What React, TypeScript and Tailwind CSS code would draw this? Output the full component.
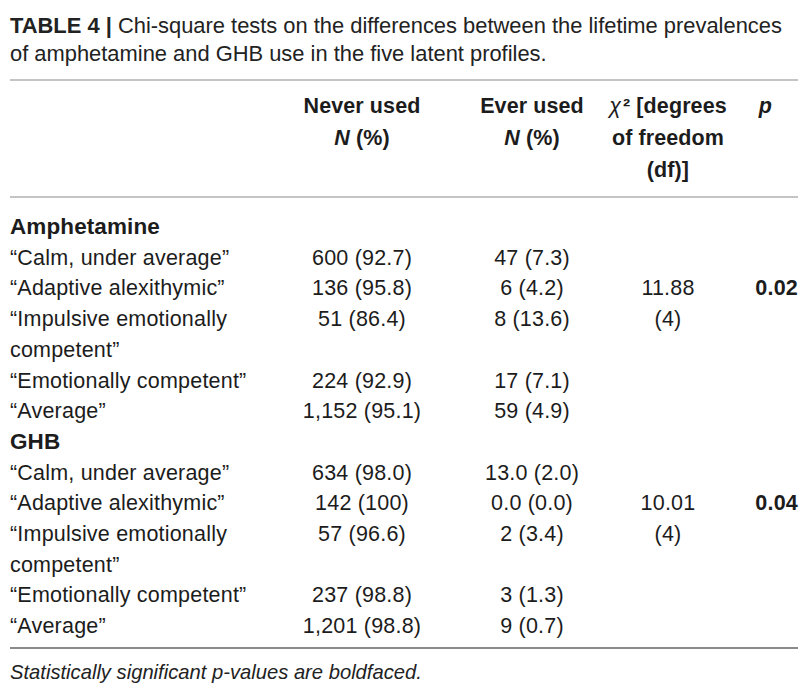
const font = { fontFamily: '"Liberation Sans", Arial, sans-serif' }

type Row = { label: string; never: string; ever: string }

const groups: { name: string; rows: Row[]; chi: string; df: string; p: string }[] = [
  {
    name: 'Amphetamine',
    chi: '11.88',
    df: '(4)',
    p: '0.02',
    rows: [
      { label: '“Calm, under average”', never: '600 (92.7)', ever: '47 (7.3)' },
      { label: '“Adaptive alexithymic”', never: '136 (95.8)', ever: '6 (4.2)' },
      { label: '“Impulsive emotionally competent”', never: '51 (86.4)', ever: '8 (13.6)' },
      { label: '“Emotionally competent”', never: '224 (92.9)', ever: '17 (7.1)' },
      { label: '“Average”', never: '1,152 (95.1)', ever: '59 (4.9)' },
    ],
  },
  {
    name: 'GHB',
    chi: '10.01',
    df: '(4)',
    p: '0.04',
    rows: [
      { label: '“Calm, under average”', never: '634 (98.0)', ever: '13.0 (2.0)' },
      { label: '“Adaptive alexithymic”', never: '142 (100)', ever: '0.0 (0.0)' },
      { label: '“Impulsive emotionally competent”', never: '57 (96.6)', ever: '2 (3.4)' },
      { label: '“Emotionally competent”', never: '237 (98.8)', ever: '3 (1.3)' },
      { label: '“Average”', never: '1,201 (98.8)', ever: '9 (0.7)' },
    ],
  },
]

const cols = 'grid grid-cols-[258px_188px_152px_120px_70px]'

function Group({ g }: { g: (typeof groups)[number] }) {
  return (
    <>
      <div className="font-bold text-[22.5px] tracking-[0.1px]">{g.name}</div>
      <div className={cols}>
        {g.rows.map((r, i) => (
          <div key={r.label} className="contents">
            <div className="pr-2">{r.label}</div>
            <div className="text-center">{r.never}</div>
            <div className="text-center">{r.ever}</div>
            {i === 1 ? (
              <>
                <div className="row-span-2 text-center">
                  {g.chi}
                  <br />
                  {g.df}
                </div>
                <div className="row-span-2 text-right font-bold">{g.p}</div>
              </>
            ) : i === 0 || i > 2 ? (
              <>
                <div />
                <div />
              </>
            ) : null}
          </div>
        ))}
      </div>
    </>
  )
}

export default function App() {
  return (
    <div className="w-[812px] h-[700px] bg-white text-[#1c1c1c]" style={font}>
      <div className="px-[10px] pt-[12px]">
        <p className="whitespace-nowrap text-[21.9px] leading-[28px] text-[#222]">
          <span className="font-bold">TABLE 4</span> <span className="font-bold">|</span> Chi-square tests on the differences between the lifetime prevalences
          <br />
          of amphetamine and GHB use in the five latent profiles.
        </p>

        <div className="mt-[11px] h-[2px] w-[788px] bg-[#c4c4c4]" />

        {/* header */}
        <div className={`${cols} pt-[9px] pb-[10px] text-[21.5px] leading-[32px] font-bold tracking-[0.1px]`}>
          <div />
          <div className="text-center">
            Never used
            <br />
            <i>N</i> (%)
          </div>
          <div className="text-center">
            Ever used
            <br />
            <i>N</i> (%)
          </div>
          <div className="text-center">
            <i className="font-normal mr-[2px]">χ</i>² [degrees of freedom (df)]
          </div>
          <div className="text-right pr-[26px]">
            <i>p</i>
          </div>
        </div>

        <div className="h-[2px] w-[788px] bg-[#c4c4c4]" />

        {/* body */}
        <div className="pt-[14px] pb-[5px] text-[21.5px] leading-[30.7px] tracking-[0.2px]">
          {groups.map((g) => (
            <Group key={g.name} g={g} />
          ))}
        </div>

        <div className="h-[2px] w-[788px] bg-[#8a8a8a]" />

        <p className="mt-[10px] text-[20.2px] leading-[26px] italic text-[#222]">
          Statistically significant <span>p</span>-values are boldfaced.
        </p>
      </div>
    </div>
  )
}
